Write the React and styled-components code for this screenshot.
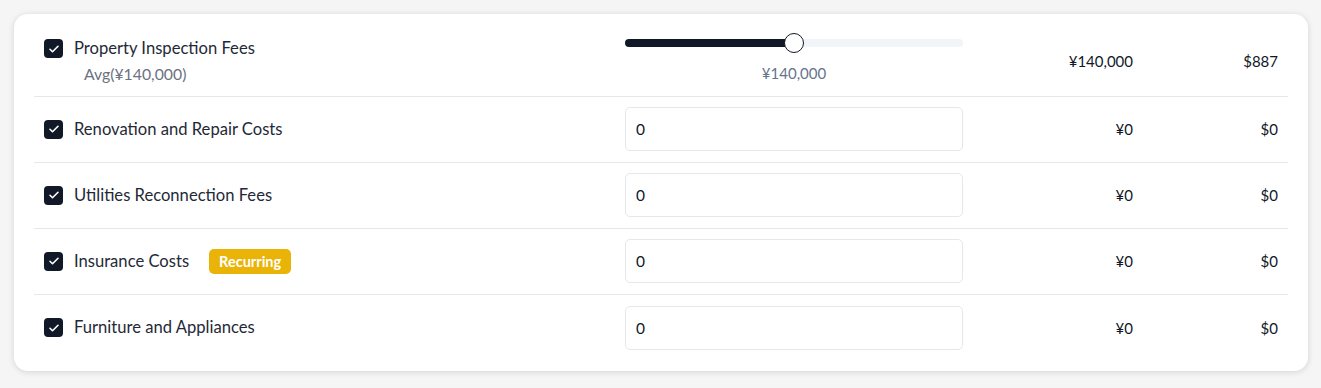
import React from 'react'
import styled, { createGlobalStyle } from 'styled-components'

const GlobalStyle = createGlobalStyle`
    body {
        margin: 0;
        background: #f5f5f5;
        font-family: Lato, "Noto Sans", sans-serif;
        color: #1f2937;
    }
`

const Page = styled.div`
    padding: 14px;
    width: 1321px;
    height: 388px;
    box-sizing: border-box;
`

const Card = styled.div`
    width: 1294px;
    box-sizing: border-box;
    background: #fff;
    border-radius: 14px;
    box-shadow: 0 1px 6px rgba(0, 0, 0, 0.14);
    padding: 10px 20px;
`

const Row = styled.div`
    display: grid;
    grid-template-columns: 1fr 338px 170px 145px;
    align-items: center;
    padding: ${p => (p.tall ? '12px 10px 10px' : '10px 10px 11px')};
    min-height: ${p => (p.tall ? '73px' : '66px')};
    box-sizing: border-box;
    border-bottom: ${p => (p.last ? 'none' : '1px solid #e5e7eb')};
`

const LabelCell = styled.div`
    display: flex;
    align-items: flex-start;
    gap: 11px;
`

const Check = styled.span`
    width: 19px;
    height: 19px;
    border-radius: 4px;
    background: #111827;
    display: flex;
    align-items: center;
    justify-content: center;
    flex-shrink: 0;
    margin-top: 3px;
`

const LabelText = styled.div`
    display: flex;
    flex-direction: column;
`

const Title = styled.div`
    display: flex;
    align-items: center;
    gap: 20px;
    font-size: 16.6px;
    line-height: 25px;
    color: #1f2937;
`

const Sub = styled.div`
    font-size: 15.8px;
    line-height: 24px;
    color: #6b7280;
    padding-left: 10px;
    margin-top: 1px;
`

const Badge = styled.span`
    background: #eab308;
    color: #fff;
    font-weight: 700;
    font-size: 14.5px;
    line-height: 25px;
    padding: 0 10px;
    border-radius: 5px;
`

const Input = styled.input`
    width: 338px;
    height: 44px;
    box-sizing: border-box;
    border: 1px solid #e5e7eb;
    border-radius: 5px;
    padding: 0 10px;
    font-family: inherit;
    font-size: 15.5px;
    color: #111827;
    outline: none;
`

const SliderWrap = styled.div`
    display: flex;
    flex-direction: column;
    padding-top: 1px;
`

const Track = styled.div`
    position: relative;
    height: 8px;
    border-radius: 4px;
    background: #f1f5f9;
`

const Fill = styled.div`
    height: 100%;
    border-radius: 4px;
    background: #111827;
`

const Thumb = styled.div`
    position: absolute;
    top: 50%;
    width: 20px;
    height: 20px;
    box-sizing: border-box;
    border-radius: 50%;
    background: #fff;
    border: 1.5px solid #111827;
    transform: translate(-50%, -50%);
`

const SliderValue = styled.div`
    font-size: 15px;
    line-height: 24px;
    color: #64748b;
    margin-top: 14px;
    text-align: center;
`

const Amount = styled.div`
    text-align: right;
    font-size: 15px;
    color: #111827;
`

const CheckIcon = () => (
    <svg width="12" height="12" viewBox="0 0 24 24" fill="none" stroke="#fff" strokeWidth="3.2" strokeLinecap="round" strokeLinejoin="round">
        <path d="M4 12.5l5 5L20 6.5" />
    </svg>
)

const rows = [
    { label: 'Renovation and Repair Costs' },
    { label: 'Utilities Reconnection Fees' },
    { label: 'Insurance Costs', badge: 'Recurring' },
    { label: 'Furniture and Appliances' },
]

const Slider = ({ pct, label }) => {
    const pos = `calc(10px + (100% - 20px) * ${pct})`
    return (
        <SliderWrap>
            <Track>
                <Fill style={{ width: pos }} />
                <Thumb style={{ left: pos }} />
            </Track>
            <SliderValue>{label}</SliderValue>
        </SliderWrap>
    )
}

const App = () => {
    return (
        <Page>
            <GlobalStyle />
            <Card>
                <Row tall>
                    <LabelCell>
                        <Check><CheckIcon /></Check>
                        <LabelText>
                            <Title>Property Inspection Fees</Title>
                            <Sub>Avg(¥140,000)</Sub>
                        </LabelText>
                    </LabelCell>
                    <Slider pct={0.5} label="¥140,000" />
                    <Amount>¥140,000</Amount>
                    <Amount>$887</Amount>
                </Row>
                {rows.map((r, i) => (
                    <Row key={r.label} last={i === rows.length - 1}>
                        <LabelCell>
                            <Check><CheckIcon /></Check>
                            <Title>
                                {r.label}
                                {r.badge && <Badge>{r.badge}</Badge>}
                            </Title>
                        </LabelCell>
                        <Input defaultValue="0" />
                        <Amount>¥0</Amount>
                        <Amount>$0</Amount>
                    </Row>
                ))}
            </Card>
        </Page>
    )
}

export default App
